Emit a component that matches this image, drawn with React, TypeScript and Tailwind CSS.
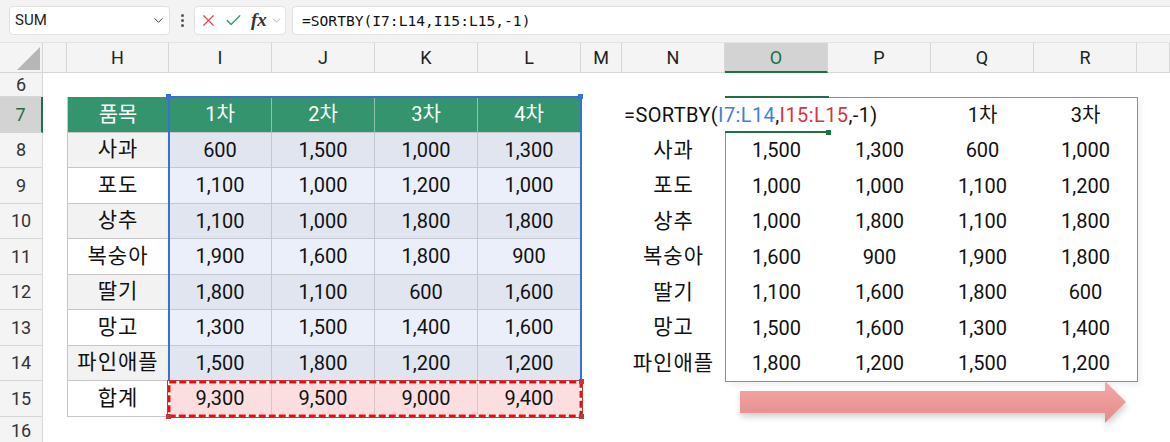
import React from 'react';
import { X, Check, ChevronDown } from 'lucide-react';

const left = [
  ['사과', '600', '1,500', '1,000', '1,300'],
  ['포도', '1,100', '1,000', '1,200', '1,000'],
  ['상추', '1,100', '1,000', '1,800', '1,800'],
  ['복숭아', '1,900', '1,600', '1,800', '900'],
  ['딸기', '1,800', '1,100', '600', '1,600'],
  ['망고', '1,300', '1,500', '1,400', '1,600'],
  ['파인애플', '1,500', '1,800', '1,200', '1,200'],
];
const totals = ['9,300', '9,500', '9,000', '9,400'];

const right = [
  ['사과', '1,500', '1,300', '600', '1,000'],
  ['포도', '1,000', '1,000', '1,100', '1,200'],
  ['상추', '1,000', '1,800', '1,100', '1,800'],
  ['복숭아', '1,600', '900', '1,900', '1,800'],
  ['딸기', '1,100', '1,600', '1,800', '600'],
  ['망고', '1,500', '1,600', '1,300', '1,400'],
  ['파인애플', '1,800', '1,200', '1,500', '1,200'],
];

const letters = ['', '', 'H', 'I', 'J', 'K', 'L', 'M', 'N', 'O', 'P', 'Q', 'R', ''];

function RowHead({ n, active }: { n: number; active?: boolean }) {
  return active ? (
    <div className="flex items-center justify-center border-r-2 border-b border-r-[#1e7145] border-b-[#d4d4d4] bg-[#d3d3d3] text-[18px] text-[#1e6e42]">
      {n}
    </div>
  ) : (
    <div className="flex items-center justify-center border-r border-b border-[#d6d6d6] bg-[#f4f4f4] text-[18px] text-[#333]">
      {n}
    </div>
  );
}

function Blank() {
  return <div className="bg-white" />;
}

function FormulaBar() {
  return (
    <div className="flex h-[43px] items-start bg-[#f3f3f3] pt-[6px] border-b border-[#e3e3e3]">
      <div className="ml-[9px] flex h-[29px] w-[161px] items-center justify-between rounded-[4px] border border-[#e0e0e0] bg-white pl-[5px] pr-[3px]">
        <span className="text-[15px] text-[#222]">SUM</span>
        <ChevronDown size={15} strokeWidth={1.6} className="text-[#444]" />
      </div>
      <div className="flex h-[29px] w-[24px] flex-col items-center justify-center gap-[2px]">
        <span className="h-[3px] w-[3px] rounded-full bg-[#555]" />
        <span className="h-[3px] w-[3px] rounded-full bg-[#555]" />
        <span className="h-[3px] w-[3px] rounded-full bg-[#555]" />
      </div>
      <div className="flex h-[29px] w-[92px] items-center rounded-[4px] border border-[#e0e0e0] bg-white pl-[4px]">
        <X size={19} strokeWidth={1.5} className="text-[#e5474d]" />
        <Check size={19} strokeWidth={1.6} className="ml-[6px] text-[#2e9a5e]" />
        <span className="ml-[8px] font-['Liberation_Serif',serif] text-[19px] italic font-semibold text-[#333]">fx</span>
        <ChevronDown size={13} strokeWidth={1.5} className="ml-[3px] text-[#999]" />
      </div>
      <div className="ml-[6px] flex h-[29px] flex-1 items-center rounded-l-[4px] border border-r-0 border-[#e0e0e0] bg-white pl-[9px]">
        <span className="font-['DejaVu_Sans_Mono',monospace] text-[14.6px] text-[#111]">=SORTBY(I7:L14,I15:L15,-1)</span>
      </div>
    </div>
  );
}

function Sheet() {
  const cells: React.ReactNode[] = [];

  // column headers
  letters.forEach((l, i) => {
    if (i === 0) {
      cells.push(
        <div key="corner" className="relative border-r border-b border-[#d6d6d6] bg-[#f4f4f4]">
          <svg className="absolute left-[17px] top-[4px]" width="24" height="24" viewBox="0 0 24 24">
            <polygon points="23,0 23,23 0,23" fill="#b6b6b6" />
          </svg>
        </div>
      );
    } else if (l === 'O') {
      cells.push(
        <div key={'c' + i} className="flex items-center justify-center border-r border-b-2 border-r-[#d6d6d6] border-b-[#1e7145] bg-[#d3d3d3] text-[18px] text-[#1e6e42]">
          {l}
        </div>
      );
    } else {
      cells.push(
        <div key={'c' + i} className="flex items-center justify-center border-r border-b border-[#d6d6d6] bg-[#f4f4f4] text-[18px] text-[#222]">
          {l}
        </div>
      );
    }
  });

  // row 6
  cells.push(<RowHead key="r6" n={6} />);
  for (let i = 1; i < 14; i++) cells.push(<Blank key={'r6-' + i} />);

  // row 7
  cells.push(<RowHead key="r7" n={7} active />);
  cells.push(<Blank key="r7-g" />);
  ['품목', '1차', '2차', '3차', '4차'].forEach((t, i) => (
    cells.push(
      <div key={'r7h' + i} className={`flex items-center justify-center border-r border-b border-r-[#8cc4aa] border-b-[#c6c6c6] bg-[#33946d] text-white ${i === 0 ? 'border-l border-l-[#c6c6c6] text-[21px]' : 'text-[20px]'}`}>
        {t}
      </div>
    )
  ));
  cells.push(<Blank key="r7-m" />);
  cells.push(<Blank key="r7-n" />);
  cells.push(<Blank key="r7-o" />);
  cells.push(<Blank key="r7-p" />);
  cells.push(<div key="r7-q" className="flex items-center justify-center bg-white text-[20px]">1차</div>);
  cells.push(<div key="r7-r" className="flex items-center justify-center bg-white text-[20px]">3차</div>);
  cells.push(<Blank key="r7-s" />);

  // rows 8..14
  left.forEach((row, r) => {
    const odd = r % 2 === 0;
    cells.push(<RowHead key={'rh' + r} n={8 + r} />);
    cells.push(<Blank key={'g' + r} />);
    cells.push(
      <div key={'h' + r} className={`flex items-center justify-center border-l border-r border-b border-[#c6c6c6] text-[21px] tracking-[1px] ${odd ? 'bg-[#f2f2f2]' : 'bg-white'}`}>
        {row[0]}
      </div>
    );
    row.slice(1).forEach((v, c) => (
      cells.push(
        <div key={'v' + r + c} className={`flex items-center justify-center border-r border-b border-[#c4c7cf] text-[20px] ${odd ? 'bg-[#e1e5ef]' : 'bg-[#ebeff9]'}`}>
          {v}
        </div>
      )
    ));
    cells.push(<Blank key={'m' + r} />);
    cells.push(
      <div key={'n' + r} className="flex items-center justify-center bg-white text-[21px] tracking-[1px]">
        {right[r][0]}
      </div>
    );
    right[r].slice(1).forEach((v, c) => (
      cells.push(
        <div key={'rv' + r + c} className="flex items-center justify-center bg-white text-[20px]">
          {v}
        </div>
      )
    ));
    cells.push(<Blank key={'s' + r} />);
  });

  // row 15
  cells.push(<RowHead key="r15" n={15} />);
  cells.push(<Blank key="r15-g" />);
  cells.push(
    <div key="r15-h" className="flex items-center justify-center border-l border-r border-b border-[#c6c6c6] bg-white text-[21px] tracking-[1px]">
      합계
    </div>
  );
  totals.forEach((v, c) => (
    cells.push(
      <div key={'t' + c} className="flex items-center justify-center border-r border-b border-[#d9c4c6] bg-[#fbdfe0] text-[20px]">
        {v}
      </div>
    )
  ));
  for (let i = 7; i < 14; i++) cells.push(<Blank key={'r15-' + i} />);

  // row 16
  cells.push(<RowHead key="r16" n={16} />);
  for (let i = 1; i < 14; i++) cells.push(<Blank key={'r16-' + i} />);

  return (
    <div className="relative h-[399px] overflow-hidden">
      <div className="grid h-full grid-cols-[43px_24px_102px_103px_103px_103px_103px_41px_103px_103px_103px_103px_103px_1fr] grid-rows-[30px_24px_repeat(9,35.5px)_1fr] text-[#111]">
        {cells}
      </div>

      {/* spill range border */}
      <div className="absolute left-[725px] top-[54px] h-[285px] w-[413px] border border-[#6f8fd3] shadow-[3px_3px_6px_rgba(0,0,0,0.06)]" />

      {/* formula being edited */}
      <div className="absolute left-[620px] top-[55px] flex h-[33px] w-[258px] items-center bg-white pl-[4px] text-[20px] tracking-[0.4px] text-[#111]">
        <span>=SORTBY(</span>
        <span className="text-[#3f7fdc]">I7:L14</span>
        <span>,</span>
        <span className="text-[#d8353a]">I15:L15</span>
        <span>,-1)</span>
      </div>

      {/* active cell O7 */}
      <div className="absolute left-[725px] top-[53px] h-[2px] w-[104px] bg-[#1e7145]" />
      <div className="absolute left-[725px] top-[88px] h-[2px] w-[104px] bg-[#1e7145]" />
      <div className="absolute left-[826px] top-[87px] h-[5px] w-[5px] bg-[#1e7145]" />

      {/* blue reference I7:L14 */}
      <div className="absolute left-[168px] top-[53px] h-[286px] w-[414px] border-2 border-[#3a6fd6]" />
      <div className="absolute left-[166px] top-[51px] h-[5px] w-[5px] bg-[#3a6fd6]" />
      <div className="absolute left-[578px] top-[51px] h-[5px] w-[5px] bg-[#3a6fd6]" />

      {/* red reference I15:L15 */}
      <svg className="absolute left-[166px] top-[336px]" width="418" height="40" viewBox="0 0 418 40">
        <rect x="1.5" y="1.5" width="415" height="37" fill="none" stroke="#c0393b" strokeWidth="1" />
        <rect x="3.25" y="3.25" width="411.5" height="33.5" fill="none" stroke="#ffffff" strokeWidth="2.5" />
        <rect x="3.25" y="3.25" width="411.5" height="33.5" fill="none" stroke="#f00a0a" strokeWidth="2.5" strokeDasharray="7 3" />
        <rect x="0" y="35" width="5" height="5" fill="#c0393b" />
        <rect x="413" y="0" width="5" height="5" fill="#c0393b" />
        <rect x="413" y="35" width="5" height="5" fill="#c0393b" />
      </svg>

      {/* arrow */}
      <svg className="absolute left-[736px] top-[334px] overflow-visible" width="400" height="56" viewBox="0 0 400 56">
        <defs>
          <linearGradient id="arrowFill" x1="0" y1="0" x2="0" y2="1">
            <stop offset="0" stopColor="#f6a8a8" />
            <stop offset="1" stopColor="#e38b8b" />
          </linearGradient>
          <filter id="arrowShadow" x="-5%" y="-40%" width="110%" height="200%">
            <feDropShadow dx="1" dy="4" stdDeviation="3" floodColor="#000" floodOpacity="0.18" />
          </filter>
        </defs>
        <polygon points="4,14 369,14 369,4 390,25 369,46 369,36 4,36" fill="url(#arrowFill)" filter="url(#arrowShadow)" />
      </svg>
    </div>
  );
}

export default function App() {
  return (
    <div className="h-[442px] w-[1170px] overflow-hidden bg-white font-['Roboto','Noto_Sans_CJK_KR',sans-serif]">
      <FormulaBar />
      <Sheet />
    </div>
  );
}
